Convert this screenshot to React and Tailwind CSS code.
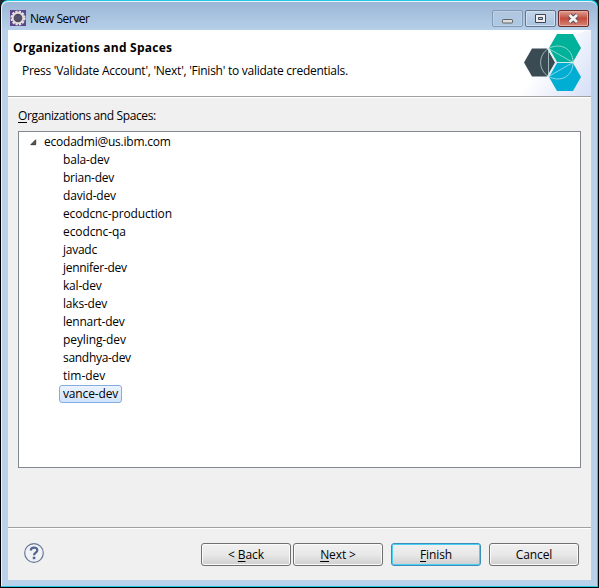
import React from "react";

const SPACES = [
  ["bala-dev", "tracking-[-0.15px]"],
  ["brian-dev", "tracking-[-0.25px]"],
  ["david-dev", "tracking-[-0.15px]"],
  ["ecodcnc-production", "tracking-[-0.15px]"],
  ["ecodcnc-qa", "tracking-[-0.1px]"],
  ["javadc", "tracking-[-0.25px]"],
  ["jennifer-dev", "tracking-[-0.28px]"],
  ["kal-dev", "tracking-[-0.2px]"],
  ["laks-dev", "tracking-[-0.2px]"],
  ["lennart-dev", "tracking-[-0.25px]"],
  ["peyling-dev", "tracking-[-0.1px]"],
  ["sandhya-dev", "tracking-[-0.3px]"],
  ["tim-dev", "tracking-[0px]"],
];

function EclipseIcon() {
  return (
    <svg width="16" height="16" viewBox="0 0 16 16" className="shrink-0">
      <rect width="16" height="16" fill="#5b4787" />
      <circle cx="8" cy="8" r="6.5" fill="none" stroke="#e7e3e3" strokeWidth="2.2" strokeDasharray="2.2 1.2" />
      <circle cx="8" cy="8" r="5.3" fill="#504c65" stroke="#e4dfdd" strokeWidth="1.9" />
      <path d="M4.500 7h7M4.500 9h7" stroke="#6b6780" strokeWidth=".6" />
    </svg>
  );
}

function CloudLogo() {
  return (
    <svg width="72" height="66" viewBox="0 0 72 66" className="shrink-0">
      <defs>
        <linearGradient id="wash" gradientUnits="userSpaceOnUse" x1="22" y1="30" x2="72" y2="62">
          <stop offset="0" stopColor="#ffffff" />
          <stop offset="1" stopColor="#d6e0f7" />
        </linearGradient>
      </defs>
      <path d="M0 66C10 40 35 5 72 0v66z" fill="url(#wash)" />
      <path d="M13 18.500H28L36 32.500L28 46.500H13L5 32.500Z" fill="#3b4b54" />
      <path d="M38 4H54L62 18L54 32H38L30 18Z" fill="#00b299" />
      <path d="M38 33H54L62 47L54 61H38L30 47Z" fill="#00aed3" />
      <g fill="none" stroke="#c4e6e6" strokeOpacity=".7" strokeWidth="1">
        <path d="M29.500 18.500C42 12 54 19 54 32.500S42 53 29.500 46.500" />
        <path d="M29.500 18.500L54 32.500L29.500 46.500Z" />
        <path d="M29.500 18.500C19 25 19 40 29.500 46.500" />
        <path d="M29.500 18.500L37 32.500H54M37 32.500L29.500 46.500" />
      </g>
    </svg>
  );
}

function CaptionButton({ kind }) {
  const close = kind === "close";
  const tone = {
    min: "border-[#8499b5] from-[#b1c7df] to-[#adc7e2] shadow-[inset_0_0_0_1px_#bdd1e7]",
    max: "border-[#62758b] from-[#c3d5e9] to-[#a9c3df] shadow-[inset_0_0_0_1px_#d0e0f0]",
    close: "border-[#672b2a] from-[#dba096] via-[#c34c3c] to-[#d58577] shadow-[inset_0_0_0_1px_#e7aaa1]",
  }[kind];
  return (
    <div className={`h-[17px] w-[31px] rounded-[2px] border bg-linear-to-b ${tone}`}>
      <svg width="29" height="15" viewBox="0 0 29 15" className="block">
        {kind === "min" && <rect x="9.500" y="8.500" width="10" height="3.500" rx=".7" fill="#dedede" stroke="#626262" />}
        {kind === "max" && <path d="M9.500 3.500H19.500V11.500H9.500ZM12.500 6.500V8.500H16.500V6.500Z" fill="#eee" fillRule="evenodd" stroke="#3f4459" />}
        {close && (
          <g>
            <path d="M10.500 4L18 11M18 4L10.500 11" stroke="#574b57" strokeWidth="4.6" />
            <path d="M10.500 4L18 11M18 4L10.500 11" stroke="#f3f3f3" strokeWidth="2.8" />
          </g>
        )}
      </svg>
    </div>
  );
}

function Mnemonic({ children }) {
  return <span className="underline decoration-1 underline-offset-2">{children}</span>;
}

function DialogButton({ children, primary }) {
  const edge = primary
    ? "border-[#3c8cb8] shadow-[inset_0_0_0_1px_#48d1f5]"
    : "border-[#707070] shadow-[inset_0_0_0_1px_#fafafa]";
  return (
    <button className={`h-[23px] w-[90px] rounded-[3px] border bg-linear-to-b from-[#f1f1f1] from-0% via-[#e8e8e8] via-50% to-[#cfcfcf] leading-[22px] tracking-[-0.1px] ${edge}`}>
      {children}
    </button>
  );
}

function HelpIcon() {
  return (
    <svg width="20" height="20" viewBox="0 0 20 20">
      <circle cx="10" cy="10" r="9.300" fill="#f1f2f5" stroke="#66789a" strokeWidth="1.2" />
      <path d="M6.800 7.400C6.800 3.600 13.300 3.700 13.300 7.200C13.300 9.500 10 9.600 10 12.200" fill="none" stroke="#526590" strokeWidth="2.200" />
      <rect x="8.800" y="13.700" width="2.500" height="2.500" fill="#526590" />
    </svg>
  );
}

export default function App() {
  return (
    <div className="h-[588px] w-[599px] overflow-hidden bg-[#26242c] font-['Open_Sans',sans-serif] text-[12px] text-black">
      <div className="h-[588px] w-[599px] rounded-t-[7px] border-r border-b border-l border-black bg-[#24c8e4] pt-px">
        <div className="flex h-[585px] w-[596px] flex-col rounded-t-[7px] border-t border-l border-[#eaf3fb] bg-linear-to-b from-[#9ab6d6] from-0% via-[#b9d1ea] via-[30px] to-[#b9d1ea] pr-[5px] pl-[6px]">
          <header className="flex h-[28px] shrink-0 items-start pt-[8px] pl-[2px]">
            <EclipseIcon />
            <span className="ml-1 grow leading-[18px] tracking-[-0.45px]">New Server</span>
            <div className="flex gap-[2px] pr-[3px]">
              <CaptionButton kind="min" />
              <CaptionButton kind="max" />
              <CaptionButton kind="close" />
            </div>
          </header>

          <main className="flex h-[550px] w-[583px] shrink-0 flex-col bg-[#f0f0f0]">
            <section className="flex h-[66px] shrink-0 justify-between bg-white">
              <div className="pt-[8px] pl-[5px] whitespace-nowrap">
                <h1 className="leading-[20px] font-bold tracking-[0.24px]">Organizations and Spaces</h1>
                <p className="pt-[3px] pl-[9px] leading-[20px] tracking-[-0.26px]">
                  Press 'Validate Account', 'Next', 'Finish' to validate credentials.
                </p>
              </div>
              <CloudLogo />
            </section>
            <div className="h-[2px] shrink-0 border-t border-[#a0a0a0] bg-white" />

            <section className="flex h-[429px] shrink-0 flex-col px-[10px] pt-[8px]">
              <label className="h-[25px] leading-[20px] tracking-[-0.38px]">
                <Mnemonic>O</Mnemonic>rganizations and Spaces:
              </label>
              <div className="h-[337px] w-[563px] border border-[#828790] bg-white pt-px leading-[18px]">
                <div className="flex h-[18px] items-center pl-[11px]">
                  <svg width="7" height="7" viewBox="0 0 7 7" className="mt-px">
                    <path d="M5.700.8V5.700H.8Z" fill="#595959" stroke="#262626" strokeWidth=".8" />
                  </svg>
                  <span className="ml-[7px] tracking-[-0.22px]">ecodadmi@us.ibm.com</span>
                </div>
                <ul>
                  {SPACES.map(([name, tracking]) => (
                    <li key={name} className={`h-[18px] pl-[44px] ${tracking}`}>{name}</li>
                  ))}
                  <li className="ml-[40px] h-[18px] w-[63px] rounded-[3px] border border-[#84acdd] bg-linear-to-b from-[#ecf4fe] to-[#cfe3fd] pl-[3px] leading-[16px] tracking-[-0.15px]">
                    vance-dev
                  </li>
                </ul>
              </div>
            </section>

            <div className="h-[2px] shrink-0 border-t border-[#a0a0a0] bg-white" />
            <footer className="flex h-[51px] items-start pt-[14px] pr-[12px] pl-[16px]">
              <HelpIcon />
              <div className="ml-auto flex">
                <DialogButton>&lt; <Mnemonic>B</Mnemonic>ack</DialogButton>
                <div className="ml-[2px]"><DialogButton><Mnemonic>N</Mnemonic>ext &gt;</DialogButton></div>
                <div className="ml-2"><DialogButton primary><Mnemonic>F</Mnemonic>inish</DialogButton></div>
                <div className="ml-2"><DialogButton>Cancel</DialogButton></div>
              </div>
            </footer>
          </main>
        </div>
      </div>
    </div>
  );
}
